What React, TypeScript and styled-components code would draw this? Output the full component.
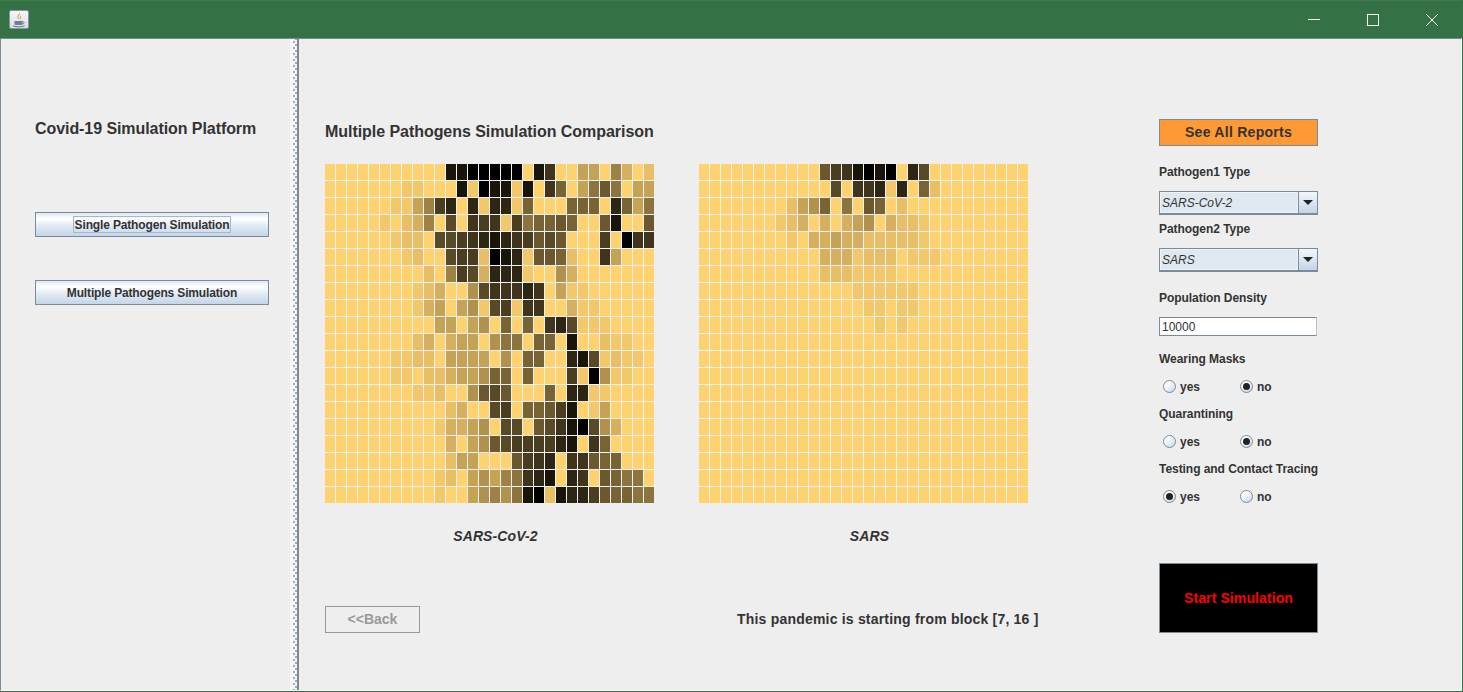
import styled, { createGlobalStyle } from 'styled-components'

const GlobalStyle = createGlobalStyle`
	html, body {
		margin: 0;
		padding: 0;
		background: #eeeeee;
	}
	* {
		box-sizing: border-box;
	}
`

const Frame = styled.div`
	width: 1463px;
	height: 692px;
	display: flex;
	flex-direction: column;
	overflow: hidden;
	background: #eeeeee;
	border: solid #347144;
	border-width: 0 1px 1px 0;
	color: #333333;
	font-family: 'Liberation Sans', Arial, sans-serif;
	font-weight: 700;
	font-size: 12px;
`

const TitleBar = styled.div`
	height: 38px;
	flex: none;
	display: flex;
	align-items: center;
	justify-content: space-between;
	background: #347144;
	border-top: 1px solid #3f7a4e;
	padding-left: 9px;
`

const AppIcon = styled.div`
	width: 20px;
	height: 19px;
	display: flex;
	align-items: center;
	justify-content: center;
	background: linear-gradient(#f6f6f6, #d9dde0);
	border: 1px solid #8796a3;
	border-radius: 2px;
`

const WindowButtons = styled.div`
	display: flex;
	padding-right: 1px;
`

const WindowButton = styled.div`
	width: 59px;
	height: 37px;
	display: flex;
	align-items: center;
	justify-content: center;
`

const Body = styled.div`
	flex: 1;
	display: flex;
	min-height: 0;
	border-top: 1px solid #7a8a99;
	border-left: 1px solid #7a8a99;
	border-right: 1px solid #f8f8f8;
	border-bottom: 1px solid #f8f8f8;
`

const Sidebar = styled.aside`
	width: 289px;
	flex: none;
	padding: 81px 0 0 34px;
`

const AppTitle = styled.h1`
	margin: 0 0 74px;
	font-size: 16px;
	line-height: 18px;
	font-weight: 700;
	letter-spacing: -0.07px;
`

const NavButton = styled.button<{ $focused?: boolean }>`
	display: flex;
	align-items: center;
	justify-content: center;
	width: 234px;
	height: 25px;
	margin-bottom: 43px;
	padding: 0;
	border: 1px solid #7a8a99;
	background: linear-gradient(#dde8f3 0%, #ffffff 25%, #e6eef6 50%, #c4d5e8 100%);
	color: #333333;
	font: inherit;
	letter-spacing: -0.15px;

	span {
		padding: 1px 1px 0;
		line-height: 14px;
		border: 1px solid ${(p) => (p.$focused ? '#a3b8d0' : 'transparent')};
	}
`

const Splitter = styled.div`
	width: 9px;
	flex: none;
	background-color: #f5f5f5;
	background-image:
		radial-gradient(circle, #a2a9af 0.7px, transparent 1px),
		radial-gradient(circle, #a2a9af 0.7px, transparent 1px);
	background-size: 2px 6px;
	background-position: 3px 0, 5px 3px;
	background-repeat: repeat-y;
	border-right: 2px solid #7a8a99;
`

const Main = styled.main`
	flex: 1;
	display: flex;
	padding: 80px 0 0 26px;
`

const Stage = styled.section`
	width: 834px;
	flex: none;
`

const Heading = styled.h2`
	margin: 4px 0 23px;
	font-size: 16px;
	line-height: 18px;
	font-weight: 700;
	letter-spacing: -0.05px;
`

const Boards = styled.div`
	display: flex;
	gap: 45px;
`

const Board = styled.figure`
	margin: 0;
	width: 329px;
`

const Grid = styled.div`
	display: grid;
	grid-template-columns: repeat(30, 10px);
	grid-auto-rows: 16px;
	gap: 1px;
	background: #f2f2f2;
`

const shadeScale = [1, 0.95, 0.91, 0.84, 0.77, 0.69, 0.62, 0.55, 0.47, 0.42, 0.35, 0.29, 0.25, 0.18, 0.1, 0]

const Cell = styled.div<{ $shade: number }>`
	background: ${(p) => {
		const k = shadeScale[p.$shade]
		return `rgb(${Math.round(255 * k)}, ${Math.round(210 * k)}, ${Math.round(112 * k)})`
	}};
`

const Caption = styled.figcaption`
	margin-top: 25px;
	padding-left: 12px;
	text-align: center;
	font-size: 14px;
	line-height: 16px;
	font-style: italic;
	letter-spacing: 0.1px;
`

const Footer = styled.div`
	display: flex;
	align-items: center;
	gap: 317px;
	margin-top: 62px;
`

const BackButton = styled.button`
	width: 95px;
	height: 27px;
	padding: 0 0 2px;
	background: #eeeeee;
	border: 1px solid #999999;
	color: #999999;
	font: inherit;
	font-size: 14px;
`

const Status = styled.div`
	padding-bottom: 2px;
	font-size: 14px;
	letter-spacing: 0.2px;
	white-space: nowrap;
`

const Controls = styled.section`
	width: 159px;
	flex: none;
	display: flex;
	flex-direction: column;
`

const ReportButton = styled.button`
	height: 27px;
	padding: 0 0 2px;
	background: #ff9933;
	border: 1px solid #7a8a99;
	color: #333333;
	font: inherit;
	font-size: 14px;
	letter-spacing: 0.27px;
`

const FieldLabel = styled.div<{ $top: number }>`
	margin-top: ${(p) => p.$top}px;
	line-height: 16px;
	letter-spacing: -0.05px;
	white-space: nowrap;
`

const Combo = styled.div`
	display: flex;
	height: 24px;
	margin-top: 11px;
	border: 1px solid #7a8a99;
	border-width: 1px 1px 2px 1px;
`

const ComboValue = styled.div`
	flex: 1;
	display: flex;
	align-items: center;
	padding-left: 1px;
	background: #dfe7ef;
	border: 1px solid #eef3f8;
	font-weight: 400;
	font-style: italic;
`

const ComboArrow = styled.div`
	width: 19px;
	display: flex;
	align-items: center;
	justify-content: center;
	border-left: 1px solid #7a8a99;
	background: linear-gradient(#f4f7fa, #c4d5e8);

	&::after {
		content: '';
		border-top: 5px solid #222222;
		border-left: 5px solid transparent;
		border-right: 5px solid transparent;
	}
`

const TextInput = styled.input`
	width: 158px;
	height: 19px;
	margin-top: 11px;
	padding: 1px 2px 0;
	background: #ffffff;
	border: 1px solid #7a8a99;
	border-right-color: #b8c4cf;
	border-radius: 0;
	outline: none;
	color: #333333;
	font: inherit;
	font-weight: 400;
`

const RadioRow = styled.div`
	display: flex;
	height: 16px;
	margin-top: 11px;
	padding-left: 4px;
`

const Radio = styled.label`
	width: 77px;
	display: flex;
	align-items: center;
	gap: 4px;

	span:last-child {
		padding-top: 1px;
	}
`

const RadioDot = styled.span<{ $checked?: boolean }>`
	width: 13px;
	height: 13px;
	display: flex;
	align-items: center;
	justify-content: center;
	border-radius: 50%;
	border: 1px solid #7a8a99;
	background: linear-gradient(145deg, #ffffff 25%, #c4d5e8);

	&::after {
		content: '';
		display: ${(p) => (p.$checked ? 'block' : 'none')};
		width: 7px;
		height: 7px;
		border-radius: 50%;
		background: #222222;
	}
`

const StartButton = styled.button`
	height: 70px;
	margin-top: 59px;
	padding: 0;
	background: #000000;
	border: 1px solid #7a8a99;
	color: #ff0000;
	font: inherit;
	font-size: 14px;
	letter-spacing: 0.1px;
`

const board1 = [
	'00000000000eefffff0ec00440630 2',
	'000000011000e1fee1e0c80479704 4',
	'00000011 46bd0d1dd1800088 80d847',
	'000001023 60a0cbc1b7889800 9e009',
	'000000122 0aabcdedcb9a9000b0fcc',
	'00000001200abb2fed1 99820 0c4000',
	'000000000 20 6ba3ddd1005 30000000',
	'00000000123 00 5acccdc04110 00000',
	'00000000134 04 51ab1cc003110 0000',
	'0000000000440 45080 80cda1110000',
	'000000002 303 4 4 0 577 0 880 e 0 0 2 1 1 0 0',
	'0000001122 0 4 4 4 4 0 5 0 8 8 0 0 d e a 1 2 1 1 0',
	'0000001102 2 3 4 4 5 8 8 0 8 0 0 0 b 1 f 5 1 1 0 0',
	'00000000 1 1 2 0 0 5 9 a 9 0 0 0 8 0 d d 1 1 0 0 0 0',
	'00000000000 2 3 0 0 a b 0 8 8 9 b e 0 1 4 0 0 0 0',
	'0000000000 1 3 3 4 5 0 a a 0 9 a c e f a 5 3 0 0 0',
	'00000000000 3 0 4 5 9 a b b b b d e 0 c 8 0 0 0 0',
	'00000000000 2 4 4 0 0 0 9 b c d 0 c c 9 8 8 0 0 0',
	'0000000000 1 2 0 4 5 4 6 7 c d e 0 d c 0 9 8 7 7 0',
	'0000000000 1 0 0 4 5 6 5 7 e f 2 e d d b 9 8 8 7 7',
]

const board2 = [
	'00000000000 9 b c e f e f 0 d a 000000000',
	'000000000000 a 0 c c d 1 d 0 8 2 00000000',
	'00000000 2 4 5 8 0 7 0 9 8 0 2 00000000000',
	'0000000 1 2 3 0 3 0 3 4 5 0 3 2 2 1 000000000',
	'00000000 1 0 3 3 4 3 3 2 2 2 2 2 1 000000000',
	'00000000000 3 3 3 1 2 2 2 0 1 1 1 00000000',
	'00000000000 2 2 2 1 1 1 1 000000000000',
	'00000000000000 1 1 1 1 1 1 0000000000',
	'000000000000000 1 1 0 1 1 0000000000',
	'0000000000000000 1 0 1 00000000000',
	...Array(10).fill('0'.repeat(30)),
]

const toShades = (rows: string[]) =>
	rows.flatMap((row) => {
		const cells = row.replace(/\s/g, '').padEnd(30, '0').slice(0, 30)
		return cells.split('').map((c) => parseInt(c, 16))
	})

const Heatmap = ({ rows }: { rows: string[] }) => (
	<Grid>
		{toShades(rows).map((shade, i) => (
			<Cell key={i} $shade={shade} />
		))}
	</Grid>
)

const RadioPair = ({ selected }: { selected: 'yes' | 'no' }) => (
	<RadioRow>
		<Radio>
			<RadioDot $checked={selected === 'yes'} />
			<span>yes</span>
		</Radio>
		<Radio>
			<RadioDot $checked={selected === 'no'} />
			<span>no</span>
		</Radio>
	</RadioRow>
)

const JavaIcon = () => (
	<svg width="14" height="16" viewBox="0 0 14 16" fill="none">
		<path d="M7.5 0.5c1.5 2-2 3-1 5 .4.8 1 1.2 1 2-.8-.8-2.400-1.600-2-3.200C5.900 2.800 7.800 2.200 7.500.5z" fill="#e8792b" />
		<path d="M9 3c-1 1-1.500 1.800-.8 3 .3.6.2 1-.2 1.500 1.200-.5 1.600-1.500 1-2.600C8.600 4.200 8.600 3.600 9 3z" fill="#f0a050" />
		<path d="M2.500 9h8v2.500c0 1-1 1.500-2 1.500h-4c-1 0-2-.5-2-1.500z" fill="#6d8296" />
		<path d="M10.500 9.500c2 0 2.500 2-.5 2.500" stroke="#6d8296" strokeWidth="1" />
		<path d="M1 13.800c2.500 1.400 9 1.400 11.500 0" stroke="#6d8296" strokeWidth="1.200" />
	</svg>
)

export default function App() {
	return (
		<>
			<GlobalStyle />
			<Frame>
				<TitleBar>
					<AppIcon>
						<JavaIcon />
					</AppIcon>
					<WindowButtons>
						<WindowButton>
							<svg width="12" height="12" viewBox="0 0 12 12">
								<path d="M0 5.500h12" stroke="#fff" strokeWidth="1" />
							</svg>
						</WindowButton>
						<WindowButton>
							<svg width="12" height="12" viewBox="0 0 12 12" fill="none">
								<rect x="0.500" y="0.500" width="11" height="11" stroke="#fff" strokeWidth="1" />
							</svg>
						</WindowButton>
						<WindowButton>
							<svg width="12" height="12" viewBox="0 0 12 12">
								<path d="M0 0l12 12M12 0L0 12" stroke="#fff" strokeWidth="1" />
							</svg>
						</WindowButton>
					</WindowButtons>
				</TitleBar>
				<Body>
					<Sidebar>
						<AppTitle>Covid-19 Simulation Platform</AppTitle>
						<NavButton $focused>
							<span>Single Pathogen Simulation</span>
						</NavButton>
						<NavButton>
							<span>Multiple Pathogens Simulation</span>
						</NavButton>
					</Sidebar>
					<Splitter />
					<Main>
						<Stage>
							<Heading>Multiple Pathogens Simulation Comparison</Heading>
							<Boards>
								<Board>
									<Heatmap rows={board1} />
									<Caption>SARS-CoV-2</Caption>
								</Board>
								<Board>
									<Heatmap rows={board2} />
									<Caption>SARS</Caption>
								</Board>
							</Boards>
							<Footer>
								<BackButton>&lt;&lt;Back</BackButton>
								<Status>This pandemic is starting from block [7, 16 ]</Status>
							</Footer>
						</Stage>
						<Controls>
							<ReportButton>See All Reports</ReportButton>
							<FieldLabel $top={18}>Pathogen1 Type</FieldLabel>
							<Combo>
								<ComboValue>SARS-CoV-2</ComboValue>
								<ComboArrow />
							</Combo>
							<FieldLabel $top={6}>Pathogen2 Type</FieldLabel>
							<Combo>
								<ComboValue>SARS</ComboValue>
								<ComboArrow />
							</Combo>
							<FieldLabel $top={18}>Population Density</FieldLabel>
							<TextInput defaultValue="10000" />
							<FieldLabel $top={15}>Wearing Masks</FieldLabel>
							<RadioPair selected="no" />
							<FieldLabel $top={12}>Quarantining</FieldLabel>
							<RadioPair selected="no" />
							<FieldLabel $top={12}>Testing and Contact Tracing</FieldLabel>
							<RadioPair selected="yes" />
							<StartButton>Start Simulation</StartButton>
						</Controls>
					</Main>
				</Body>
			</Frame>
		</>
	)
}
